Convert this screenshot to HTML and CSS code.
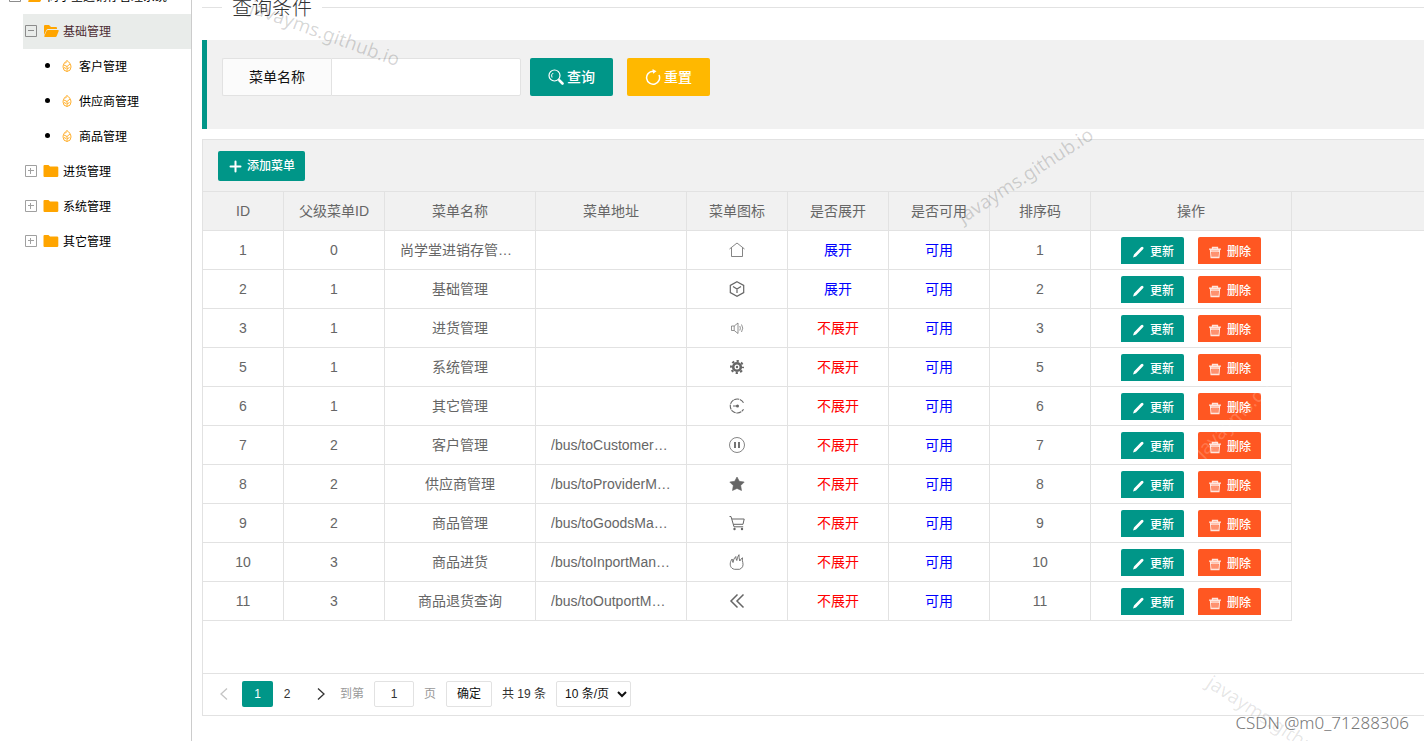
FILE: index.html
```html
<!DOCTYPE html>
<html lang="zh-CN">
<head>
<meta charset="utf-8">
<title>菜单管理</title>
<link rel="stylesheet" href="styles.css">
</head>
<body>
<svg class="sprite" aria-hidden="true">
  <symbol id="minus-box" viewBox="0 0 12 12"><path d="M.5.5h11v11H.5zM3 5.500h6" fill="none" stroke="#8c8c8c"/></symbol>
  <symbol id="plus-box" viewBox="0 0 12 12"><path d="M.5.5h11v11H.5zM3 5.500h6M5.500 3v6" fill="none" stroke="#a0a0a0"/></symbol>
  <symbol id="folder-open" viewBox="0 0 16 14"><path d="M1 2q0-1 1-1h4l2 2h5q1 0 1 1v1H5Q4 5 3.500 6L1 11z" fill="#ffa500"/><path d="M5 6h10q1 0 .7 1l-2 5q-.3 1-1.300 1H2q-1 0-.7-1l2.200-5Q4 6 5 6z" fill="#ffa500"/></symbol>
  <symbol id="folder" viewBox="0 0 16 14"><path d="M.5 2q0-1 1-1h4l1.500 1.500H14q1.300 0 1.300 1V12q0 1-1.300 1H1.500q-1 0-1-1z" fill="#ffa500"/></symbol>
  <symbol id="leaf" viewBox="0 0 10 14"><g fill="none" stroke="#ffb02e"><path d="M5 1.500C7 3 9 5 9 8q0 4-4 4.500Q1 12 1 8c0-3 2-5 4-6.500zM5 7.500v5M2 6l3 1.500L8 5M3 4.500l2-2M5 10l2.500-1.500M2 8.500l2 1"/></g></symbol>
  <symbol id="search" viewBox="0 0 16 16"><circle cx="6.500" cy="6.500" r="5.500" fill="none" stroke="currentColor" stroke-width="1.200"/><path d="M4 8.500Q2.500 5.500 5.200 4" fill="none" stroke="currentColor"/><path d="M11.500 11.500l3 3" stroke="currentColor" stroke-width="2.600" stroke-linecap="round"/></symbol>
  <symbol id="refresh" viewBox="0 0 16 16"><path d="M14 6A6.500 6.500 0 1 1 8 2.200" fill="none" stroke="currentColor" stroke-width="1.500"/><path d="M7.500 0l4 2.200-3.500 2.500z" fill="currentColor"/></symbol>
  <symbol id="plus" viewBox="0 0 14 14"><path d="M7.500 2.500v10M2.500 7.500h10" stroke="currentColor" stroke-width="2" stroke-linecap="round"/></symbol>
  <symbol id="pencil" viewBox="0 0 14 14"><path d="M2 12.500l1-3L10 2.200q1.200-1 2.200 0 .9 1-.2 2L5 11.500z" fill="currentColor"/></symbol>
  <symbol id="trash" viewBox="0 0 14 14"><path d="M1 4.200h12M4.500 3.500V2.500h5v1M2.500 5l.6 7.500h7.800l.6-7.500z" fill="none" stroke="currentColor" stroke-width="1.300" opacity=".85"/><path d="M5 6v6M7 6v6M9 6v6M2.500 6.500h9" stroke="currentColor" opacity=".7"/></symbol>
  <symbol id="home" viewBox="0 0 16 16"><path d="M.5 7L8 1l7.500 6M2.500 5.800v8.700h11V5.800" fill="none" stroke="currentColor" stroke-width=".8"/></symbol>
  <symbol id="cube" viewBox="0 0 16 16"><path d="M8 .8l6.700 3.600v7.200L8 15.200l-6.700-3.600V4.400zM4 5.500L8 8l4-2.500M8 8v4" fill="none" stroke="currentColor" stroke-width="1.200"/></symbol>
  <symbol id="speaker" viewBox="0 0 16 16"><path d="M2.500 6h2.700L9 3v10.500L5.200 10.500H2.500zM5.200 6v4.500M10.800 6q1.200 2.200 0 4.500M12.500 4.500q2.500 3.500 0 7.500" fill="none" stroke="currentColor" stroke-width=".7"/></symbol>
  <symbol id="gear" viewBox="0 0 16 16"><circle cx="8" cy="8" r="3.800" fill="none" stroke="currentColor" stroke-width="2.600"/><circle cx="8" cy="8" r="6" fill="none" stroke="currentColor" stroke-width="2" stroke-dasharray="2.300 2.412" stroke-dashoffset="1.150"/><circle cx="8" cy="8" r="1.200" fill="currentColor"/></symbol>
  <symbol id="circuit" viewBox="0 0 16 16"><path d="M14.500 4.800A7 7 0 1 0 14.500 11.200" fill="none" stroke="currentColor" stroke-width="1.100" stroke-dasharray="5 .7"/><path d="M4 8h5" stroke="currentColor"/><circle cx="8.500" cy="8" r="1.500" fill="currentColor"/></symbol>
  <symbol id="pause" viewBox="0 0 16 16"><circle cx="8" cy="8" r="7.500" fill="none" stroke="currentColor" stroke-width=".8"/><path d="M6 5v6M10 5v6" stroke="currentColor" stroke-width="1.800"/></symbol>
  <symbol id="star" viewBox="0 0 16 16"><path d="M8 1l2.300 4.300 4.900.7-3.500 3.600.8 4.900L8 12.400l-4.500 2.100.8-4.900L.8 6l4.900-.7z" fill="currentColor" stroke="currentColor" stroke-width=".6" stroke-linejoin="round"/></symbol>
  <symbol id="cart" viewBox="0 0 16 16"><path d="M.5 1.500H2l3 10.300h9.200M3 4h12.200l-1.200 5.300H4.500" fill="none" stroke="currentColor"/><circle cx="5.500" cy="14" r="1.200" fill="currentColor"/><circle cx="13" cy="14" r="1.200" fill="currentColor"/></symbol>
  <symbol id="fire" viewBox="0 0 16 16"><path d="M5.500 15.300C1.500 14.500.5 11 1.700 7.500Q2.200 6 3.200 5q0 2 .8 3.500Q4.500 4.500 6.800 2.500q0 2.500 1 4Q8.200 3 10 .7q-.2 3.300.8 6.300.8-2 2.700-3.200-.5 2.400.3 4.700 1.200 5-3.300 6.800z" fill="none" stroke="currentColor" stroke-width=".9"/></symbol>
  <symbol id="rewind" viewBox="0 0 16 16"><path d="M8.500 1.500L2 8l6.500 6.500M14.500 1.500L8 8l6.500 6.500" fill="none" stroke="currentColor" stroke-width="1.500"/></symbol>
  <symbol id="prev" viewBox="0 0 10 14"><path d="M8 1.500L2 7l6 5.500" fill="none" stroke="currentColor" stroke-width="1.300"/></symbol>
  <symbol id="next" viewBox="0 0 10 14"><path d="M2 1.500L8 7l-6 5.500" fill="none" stroke="currentColor" stroke-width="1.300"/></symbol>
</svg>

<div class="page">
  <nav class="side" aria-label="菜单树">
    <div class="node root"><svg class="box"><use href="#minus-box"/></svg><svg class="dir"><use href="#folder-open"/></svg><span>尚学堂进销存管理系统</span></div>
    <ul class="tree">
      <li>
        <div class="node active"><svg class="box"><use href="#minus-box"/></svg><svg class="dir"><use href="#folder-open"/></svg><span>基础管理</span></div>
        <ul class="tree leaves">
          <li class="node"><svg class="leaf"><use href="#leaf"/></svg><span>客户管理</span></li>
          <li class="node"><svg class="leaf"><use href="#leaf"/></svg><span>供应商管理</span></li>
          <li class="node"><svg class="leaf"><use href="#leaf"/></svg><span>商品管理</span></li>
        </ul>
      </li>
      <li class="node"><svg class="box"><use href="#plus-box"/></svg><svg class="dir"><use href="#folder"/></svg><span>进货管理</span></li>
      <li class="node"><svg class="box"><use href="#plus-box"/></svg><svg class="dir"><use href="#folder"/></svg><span>系统管理</span></li>
      <li class="node"><svg class="box"><use href="#plus-box"/></svg><svg class="dir"><use href="#folder"/></svg><span>其它管理</span></li>
    </ul>
  </nav>

  <main class="main">
    <fieldset class="title"><legend>查询条件</legend></fieldset>

    <form class="query">
      <div class="field">
        <label for="menu-name">菜单名称</label>
        <input id="menu-name" type="text">
      </div>
      <div class="actions">
        <button class="btn large" type="button"><svg class="ico16"><use href="#search"/></svg>查询</button>
        <button class="btn large warm" type="reset"><svg class="ico16"><use href="#refresh"/></svg>重置</button>
      </div>
    </form>

    <section class="panel">
      <div class="toolbar"><button class="btn" type="button"><svg class="ico14"><use href="#plus"/></svg>添加菜单</button></div>
      <div class="body">
        <div class="head-fill">
        <table class="grid">
          <colgroup><col class="w80"><col class="w100"><col class="w150"><col class="w150"><col class="w100"><col class="w100"><col class="w100"><col class="w100"><col class="w200"></colgroup>
          <thead><tr><th>ID</th><th>父级菜单ID</th><th>菜单名称</th><th>菜单地址</th><th>菜单图标</th><th>是否展开</th><th>是否可用</th><th>排序码</th><th>操作</th></tr></thead>
          <tbody>
            <tr><td>1</td><td>0</td><td><div class="cut">尚学堂进销存管理系统</div></td><td></td><td><svg class="ico16"><use href="#home"/></svg></td><td class="on">展开</td><td class="on">可用</td><td>1</td><td><div class="ops"><button class="btn" type="button"><svg class="ico14"><use href="#pencil"/></svg>更新</button><button class="btn danger" type="button"><svg class="ico14"><use href="#trash"/></svg>删除</button></div></td></tr>
            <tr><td>2</td><td>1</td><td>基础管理</td><td></td><td><svg class="ico16"><use href="#cube"/></svg></td><td class="on">展开</td><td class="on">可用</td><td>2</td><td><div class="ops"><button class="btn" type="button"><svg class="ico14"><use href="#pencil"/></svg>更新</button><button class="btn danger" type="button"><svg class="ico14"><use href="#trash"/></svg>删除</button></div></td></tr>
            <tr><td>3</td><td>1</td><td>进货管理</td><td></td><td><svg class="ico16"><use href="#speaker"/></svg></td><td class="off">不展开</td><td class="on">可用</td><td>3</td><td><div class="ops"><button class="btn" type="button"><svg class="ico14"><use href="#pencil"/></svg>更新</button><button class="btn danger" type="button"><svg class="ico14"><use href="#trash"/></svg>删除</button></div></td></tr>
            <tr><td>5</td><td>1</td><td>系统管理</td><td></td><td><svg class="ico16"><use href="#gear"/></svg></td><td class="off">不展开</td><td class="on">可用</td><td>5</td><td><div class="ops"><button class="btn" type="button"><svg class="ico14"><use href="#pencil"/></svg>更新</button><button class="btn danger" type="button"><svg class="ico14"><use href="#trash"/></svg>删除</button></div></td></tr>
            <tr><td>6</td><td>1</td><td>其它管理</td><td></td><td><svg class="ico16"><use href="#circuit"/></svg></td><td class="off">不展开</td><td class="on">可用</td><td>6</td><td><div class="ops"><button class="btn" type="button"><svg class="ico14"><use href="#pencil"/></svg>更新</button><button class="btn danger" type="button"><svg class="ico14"><use href="#trash"/></svg>删除</button></div></td></tr>
            <tr><td>7</td><td>2</td><td>客户管理</td><td><div class="cut">/bus/toCustomerManager</div></td><td><svg class="ico16"><use href="#pause"/></svg></td><td class="off">不展开</td><td class="on">可用</td><td>7</td><td><div class="ops"><button class="btn" type="button"><svg class="ico14"><use href="#pencil"/></svg>更新</button><button class="btn danger" type="button"><svg class="ico14"><use href="#trash"/></svg>删除</button></div></td></tr>
            <tr><td>8</td><td>2</td><td>供应商管理</td><td><div class="cut">/bus/toProviderManager</div></td><td><svg class="ico16"><use href="#star"/></svg></td><td class="off">不展开</td><td class="on">可用</td><td>8</td><td><div class="ops"><button class="btn" type="button"><svg class="ico14"><use href="#pencil"/></svg>更新</button><button class="btn danger" type="button"><svg class="ico14"><use href="#trash"/></svg>删除</button></div></td></tr>
            <tr><td>9</td><td>2</td><td>商品管理</td><td><div class="cut">/bus/toGoodsManager</div></td><td><svg class="ico16"><use href="#cart"/></svg></td><td class="off">不展开</td><td class="on">可用</td><td>9</td><td><div class="ops"><button class="btn" type="button"><svg class="ico14"><use href="#pencil"/></svg>更新</button><button class="btn danger" type="button"><svg class="ico14"><use href="#trash"/></svg>删除</button></div></td></tr>
            <tr><td>10</td><td>3</td><td>商品进货</td><td><div class="cut">/bus/toInportManager</div></td><td><svg class="ico16"><use href="#fire"/></svg></td><td class="off">不展开</td><td class="on">可用</td><td>10</td><td><div class="ops"><button class="btn" type="button"><svg class="ico14"><use href="#pencil"/></svg>更新</button><button class="btn danger" type="button"><svg class="ico14"><use href="#trash"/></svg>删除</button></div></td></tr>
            <tr><td>11</td><td>3</td><td>商品退货查询</td><td><div class="cut">/bus/toOutportManager</div></td><td><svg class="ico16"><use href="#rewind"/></svg></td><td class="off">不展开</td><td class="on">可用</td><td>11</td><td><div class="ops"><button class="btn" type="button"><svg class="ico14"><use href="#pencil"/></svg>更新</button><button class="btn danger" type="button"><svg class="ico14"><use href="#trash"/></svg>删除</button></div></td></tr>
          </tbody>
        </table>
        </div>
      </div>
      <div class="pager">
        <button class="turn muted" type="button" aria-label="上一页"><svg class="arrow"><use href="#prev"/></svg></button>
        <a class="num current" href="#">1</a>
        <a class="num" href="#">2</a>
        <button class="turn" type="button" aria-label="下一页"><svg class="arrow"><use href="#next"/></svg></button>
        <div class="jump">
          <label for="page-no">到第</label>
          <input id="page-no" type="text" value="1">
          <span>页</span>
          <button type="button">确定</button>
          <span class="total">共 19 条</span>
          <select aria-label="每页条数"><option>10 条/页</option></select>
        </div>
      </div>
    </section>
  </main>

  <span class="mark mark-a">javayms.github.io</span>
  <span class="mark mark-b">javayms.github.io</span>
  <span class="mark mark-c">javayms.github.io</span>
  <span class="mark mark-d">javayms.github.io</span>
  <span class="credit">CSDN @m0_71288306</span>
</div>
</body>
</html>
```

FILE: styles.css
```css
* { box-sizing: border-box; }
body { margin: 0; background: #fff; color: #111; font: 14px/20px "Liberation Sans", "Noto Sans CJK SC", sans-serif; }
button, input, select { font: inherit; margin: 0; }
ul { list-style: none; margin: 0; padding: 0; }
svg { display: block; flex: none; }
.sprite { position: absolute; width: 0; height: 0; }
.page { position: relative; display: flex; height: 100vh; overflow: hidden; }

/* menu tree; the view is scrolled past the top of the root row */
.side { width: 192px; flex: none; border-right: 1px solid #ccc; font-size: 12px; color: #000; margin-top: -21px; }
.tree { padding-left: 23px; }
.node { display: flex; align-items: center; height: 35px; padding-left: 2px; white-space: nowrap; }
.node svg, .leaves .node::before { margin-bottom: 2px; }
.root { padding-left: 9px; }
.active { background: #e9ecea; color: #4d2c34; }
.box { width: 12px; height: 12px; margin-right: 6px; }
.dir { width: 16px; height: 14px; margin-right: 4px; }
.leaves { padding-left: 20px; }
.leaves .node::before { content: ""; width: 5px; height: 5px; border-radius: 50%; background: #000; margin-right: 12px; }
.leaf { width: 10px; height: 14px; margin-right: 7px; }

.main { flex: 1; min-width: 0; padding-left: 10px; }
.title { margin: -8px 0 18px; padding: 0; border: 0; border-top: 1px solid #e2e2e2; min-width: 0; }
.title legend { margin-left: 20px; padding: 2px 10px 0; font-size: 20px; line-height: 28px; font-weight: 300; color: #333; }

.query { display: flex; gap: 9px; border-left: 5px solid #009688; background: #f1f1f1; padding: 18px 15px 33px; }
.field { display: flex; height: 38px; }
.field label { width: 109px; border: 1px solid #e2e2e2; border-right: 0; border-radius: 2px 0 0 2px; background: #fbfbfb; line-height: 36px; text-align: center; }
.field input { width: 190px; border: 1px solid #e2e2e2; border-radius: 0 2px 2px 0; padding: 0 10px; background: #fff; }
.actions { display: flex; gap: 14px; }

.btn { display: inline-flex; align-items: center; justify-content: center; gap: 5px; height: 30px; padding: 0 10px; border: 0; border-radius: 2px; background: #009688; color: #fff; font-size: 12px; font-weight: 500; white-space: nowrap; flex: none; }
.large { height: 38px; padding: 0 18px; gap: 3px; font-size: 14px; }
.warm { background: #ffb800; }
.danger { background: #ff5722; }
.ico14 { width: 14px; height: 14px; }
.ico16 { width: 16px; height: 16px; }

.panel { margin-top: 10px; border: 1px solid #e2e2e2; border-right: 0; }
.toolbar { background: #f1f1f1; padding: 11px 15px 10px; display: flex; border-bottom: 1px solid #e2e2e2; }
.body { padding-bottom: 52px; }
.head-fill { background: linear-gradient(#f1f1f1 38px, #e2e2e2 38px, #e2e2e2 39px, #fff 39px); }
.grid { table-layout: fixed; width: 1089px; border-collapse: separate; border-spacing: 0; color: #666; }
.w80 { width: 81px; }
.w100 { width: 101px; }
.w150 { width: 151px; }
.w200 { width: 201px; }
.grid th, .grid td { height: 39px; padding: 0 15px; border: solid #e2e2e2; border-width: 0 1px 1px 0; font-weight: 400; text-align: center; vertical-align: middle; white-space: nowrap; }
.grid th { padding: 0 10px; }
.grid .on { color: #00f; }
.grid .off { color: #f00; }
.grid td svg { margin: 0 auto; }
.cut { overflow: hidden; text-overflow: ellipsis; }
.ops { display: flex; justify-content: center; gap: 14px; height: 28px; padding-top: 1px; overflow: hidden; }

.pager { display: flex; align-items: center; height: 42px; padding: 0 0 2px 3px; border-top: 1px solid #e2e2e2; font-size: 12px; color: #333; }
.turn { display: flex; align-items: center; justify-content: center; width: 39px; height: 26px; padding: 0; border: 0; background: none; color: #333; }
.muted { width: 36px; color: #c4c4c4; }
.arrow { width: 10px; height: 14px; }
.num { width: 28px; height: 26px; line-height: 26px; text-align: center; color: #333; text-decoration: none; }
.current { width: 31px; border-radius: 2px; background: #009688; color: #fff; }
.jump { display: flex; align-items: center; gap: 10px; color: #999; }
.jump input { width: 40px; height: 26px; border: 1px solid #e2e2e2; border-radius: 2px; padding: 0; text-align: center; color: #333; }
.jump button { width: 46px; height: 26px; border: 1px solid #e2e2e2; border-radius: 2px; padding: 0; background: #fff; color: #111; }
.total { color: #333; }
.jump select { width: 75px; height: 26px; border: 1px solid #e2e2e2; border-radius: 2px; padding: 0 0 0 4px; background: #fff; color: #111; }

/* watermarks over the page */
.mark { position: absolute; font: 19px/24px "Noto Sans", sans-serif; color: rgba(0, 0, 0, .16); white-space: nowrap; transform-origin: 0 50%; pointer-events: none; }
.mark-a { left: 251px; top: -6px; transform: rotate(20deg); }
.mark-b { left: 959px; top: 206px; transform: rotate(-33deg); }
.mark-c { left: 1198px; top: 442px; transform: rotate(-45deg); color: rgba(255, 255, 255, .2); }
.mark-d { left: 1209px; top: 668px; transform: rotate(33deg); color: rgba(0, 0, 0, .1); }
.credit { position: absolute; right: 15px; bottom: 6px; font: 300 17px/24px "Noto Sans", sans-serif; color: #777; text-shadow: 1px 1px 0 #fff; }
```
